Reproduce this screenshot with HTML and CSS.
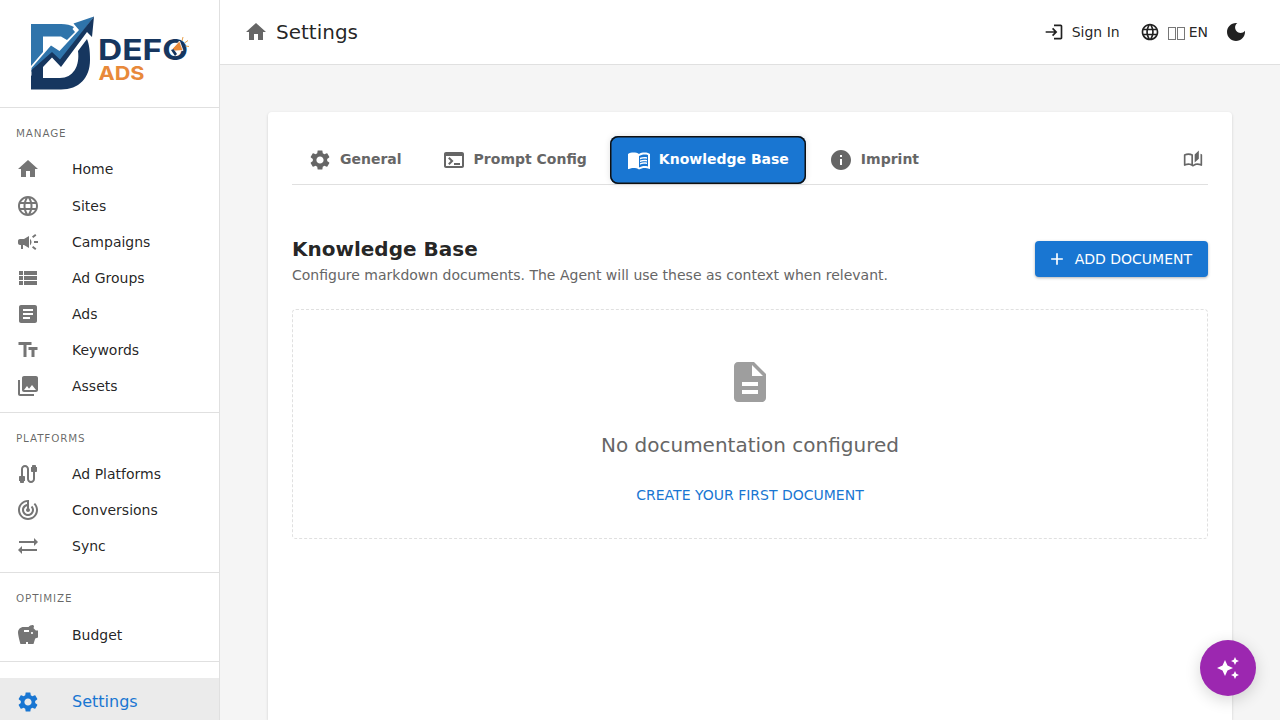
FILE: index.html
```html
<!DOCTYPE html>
<html lang="en">
<head>
    <meta charset="UTF-8">
    <meta name="viewport" content="width=device-width, initial-scale=1.0">
    <title>Settings - Defo Ads</title>
    <link rel="stylesheet" href="styles.css">
</head>
<body>

<div class="app">
    <aside class="sidebar">
        <div class="logo">
            <svg width="219" height="107" viewBox="0 0 219 107">
                <path fill="#2f74ab" d="M31 24H61Q69 24 74 27L72.500 29L75 32L67 40L61 36.500H43V52L31 66z"/>
                <path fill="#16365f" d="M31 89.500H61C79 89.500 90 78 90 60C90 50 89 44 87 39L78 51C80 66 73 78 60 78H43V66L31 76z"/>
                <path fill="#2f74ab" d="M31.500 68L51 45.500L59.500 51L79 30L73.500 23.500L94 16.500L60 62L52 54L31.500 72z"/>
                <path fill="#16365f" d="M31.500 77V70L52 52L60 59.500L94 16.500L92 37L87 32L61 67L52 57.500L43 67z"/>
                <text class="logo-defo" x="98" y="60" textLength="90" lengthAdjust="spacingAndGlyphs">DEFO</text>
                <text class="logo-ads" x="98.500" y="80" textLength="46" lengthAdjust="spacingAndGlyphs">ADS</text>
                <path fill="#e8893a" stroke="#fff" stroke-width="0.800" d="M172.500 48.500L179.500 41L183 50.500L175 51z"/>
                <path fill="#16365f" d="M171 50L173.500 49L177 54L175 56z"/>
                <path stroke="#e8a04a" stroke-width="1" d="M182 41L183 37M184.500 43L188 40.500M185.500 46L189 46.500"/>
            </svg>
        </div>

        <nav class="menu-section">
            <div class="menu-title">MANAGE</div>
            <a class="menu-item">
                <svg class="icon" viewBox="0 0 24 24"><path d="M10 20v-6h4v6h5v-8h3L12 3 2 12h3v8z"/></svg>
                <span>Home</span>
            </a>
            <a class="menu-item">
                <svg class="icon" viewBox="0 0 24 24"><path id="globe" d="M11.990 2C6.470 2 2 6.480 2 12s4.470 10 9.990 10C17.520 22 22 17.520 22 12S17.520 2 11.990 2m6.930 6h-2.950c-.32-1.250-.78-2.450-1.380-3.560 1.840.63 3.370 1.910 4.330 3.560M12 4.040c.83 1.200 1.480 2.530 1.910 3.960h-3.820c.43-1.430 1.080-2.760 1.910-3.960M4.260 14C4.100 13.360 4 12.690 4 12s.1-1.360.26-2h3.380c-.08.66-.14 1.320-.14 2s.06 1.340.14 2zm.82 2h2.950c.32 1.250.78 2.450 1.380 3.560-1.840-.63-3.370-1.900-4.330-3.560m2.950-8H5.080c.96-1.660 2.490-2.930 4.330-3.560C8.810 5.550 8.350 6.750 8.030 8M12 19.960c-.83-1.200-1.480-2.530-1.910-3.960h3.820c-.43 1.430-1.080 2.760-1.910 3.960M14.340 14H9.660c-.09-.66-.16-1.320-.16-2s.07-1.350.16-2h4.680c.09.65.16 1.320.16 2s-.07 1.340-.16 2m.25 5.560c.6-1.110 1.060-2.310 1.380-3.560h2.950c-.96 1.650-2.490 2.930-4.330 3.560M16.360 14c.08-.66.14-1.320.14-2s-.06-1.340-.14-2h3.380c.16.64.26 1.310.26 2s-.1 1.360-.26 2z"/></svg>
                <span>Sites</span>
            </a>
            <a class="menu-item">
                <svg class="icon" viewBox="0 0 24 24"><path d="M18 11v2h4v-2zm-2 6.610c.96.71 2.210 1.650 3.200 2.390.4-.53.8-1.070 1.200-1.600-.99-.74-2.240-1.680-3.200-2.400-.4.54-.8 1.080-1.200 1.610M20.400 5.600c-.4-.53-.8-1.070-1.200-1.600-.99.74-2.240 1.680-3.200 2.400.4.53.8 1.070 1.200 1.600.96-.72 2.210-1.650 3.200-2.400M4 9c-1.100 0-2 .9-2 2v2c0 1.100.9 2 2 2h1v4h2v-4h1l5 3V6L8 9zm11.500 3c0-1.330-.58-2.530-1.500-3.350v6.690c.92-.81 1.500-2.010 1.500-3.340"/></svg>
                <span>Campaigns</span>
            </a>
            <a class="menu-item">
                <svg class="icon" viewBox="0 0 24 24"><path d="M3 14h4v-4H3zm0 5h4v-4H3zM3 9h4V5H3zm5 5h13v-4H8zm0 5h13v-4H8zM8 5v4h13V5z"/></svg>
                <span>Ad Groups</span>
            </a>
            <a class="menu-item">
                <svg class="icon" viewBox="0 0 24 24"><path d="M19 3H5c-1.100 0-2 .9-2 2v14c0 1.100.9 2 2 2h14c1.100 0 2-.9 2-2V5c0-1.100-.9-2-2-2m-5 14H7v-2h7zm3-4H7v-2h10zm0-4H7V7h10z"/></svg>
                <span>Ads</span>
            </a>
            <a class="menu-item">
                <svg class="icon" viewBox="0 0 24 24"><path d="M2.500 4v3h5v12h3V7h5V4zm19 5h-9v3h3v7h3v-7h3z"/></svg>
                <span>Keywords</span>
            </a>
            <a class="menu-item">
                <svg class="icon" viewBox="0 0 24 24"><path d="M22 16V4c0-1.100-.9-2-2-2H8c-1.100 0-2 .9-2 2v12c0 1.100.9 2 2 2h12c1.100 0 2-.9 2-2m-11-4 2.030 2.710L16 11l4 5H8zM2 6v14c0 1.100.9 2 2 2h14v-2H4V6z"/></svg>
                <span>Assets</span>
            </a>
        </nav>

        <nav class="menu-section">
            <div class="menu-title">PLATFORMS</div>
            <a class="menu-item">
                <svg class="icon" viewBox="0 0 24 24"><path d="M20 5V4c0-.55-.45-1-1-1h-2c-.55 0-1 .45-1 1v1h-1v4c0 .55.45 1 1 1h1v7c0 1.100-.9 2-2 2s-2-.9-2-2V7c0-2.210-1.790-4-4-4S5 4.790 5 7v7H4c-.55 0-1 .45-1 1v4h1v1c0 .55.45 1 1 1h2c.55 0 1-.45 1-1v-1h1v-4c0-.55-.45-1-1-1H7V7c0-1.100.9-2 2-2s2 .9 2 2v10c0 2.210 1.790 4 4 4s4-1.790 4-4v-7h1c.55 0 1-.45 1-1V5z"/></svg>
                <span>Ad Platforms</span>
            </a>
            <a class="menu-item">
                <svg class="icon" viewBox="0 0 24 24"><path d="m19.070 4.930-1.410 1.410C19.100 7.790 20 9.790 20 12c0 4.420-3.580 8-8 8s-8-3.580-8-8c0-4.080 3.050-7.440 7-7.930v2.020C8.160 6.570 6 9.030 6 12c0 3.310 2.690 6 6 6s6-2.690 6-6c0-1.660-.67-3.160-1.760-4.240l-1.410 1.410C15.550 9.900 16 10.900 16 12c0 2.210-1.790 4-4 4s-4-1.790-4-4c0-1.860 1.280-3.410 3-3.860v2.140c-.6.35-1 .98-1 1.720 0 1.100.9 2 2 2s2-.9 2-2c0-.74-.4-1.380-1-1.720V2h-1C6.480 2 2 6.480 2 12s4.480 10 10 10 10-4.480 10-10c0-2.760-1.120-5.260-2.930-7.070"/></svg>
                <span>Conversions</span>
            </a>
            <a class="menu-item">
                <svg class="icon" viewBox="0 0 24 24"><path d="m18 12 4-4-4-4v3H3v2h15zM6 12l-4 4 4 4v-3h15v-2H6z"/></svg>
                <span>Sync</span>
            </a>
        </nav>

        <nav class="menu-section">
            <div class="menu-title">OPTIMIZE</div>
            <a class="menu-item">
                <svg class="icon" viewBox="0 0 24 24"><path d="m19.830 7.500-2.270-2.270c.07-.42.18-.81.32-1.150.08-.18.12-.37.12-.58 0-.83-.67-1.500-1.500-1.500-1.640 0-3.090.79-4 2h-5C4.460 4 2 6.460 2 9.500S4.500 21 4.500 21H10v-2h2v2h5.500l1.680-5.590 2.820-.94V7.500zM13 9H8V7h5zm3 2c-.55 0-1-.45-1-1s.45-1 1-1 1 .45 1 1-.45 1-1 1"/></svg>
                <span>Budget</span>
            </a>
        </nav>

        <a class="menu-item settings-item">
            <svg class="icon" viewBox="0 0 24 24"><path id="gear" d="M19.140 12.940c.04-.3.06-.61.06-.94 0-.32-.02-.64-.07-.94l2.030-1.580c.18-.14.23-.41.12-.61l-1.920-3.320c-.12-.22-.37-.29-.59-.22l-2.390.96c-.5-.38-1.030-.7-1.620-.94l-.36-2.540c-.04-.24-.24-.41-.48-.41h-3.840c-.24 0-.43.17-.47.41l-.36 2.540c-.59.24-1.130.57-1.620.94l-2.390-.96c-.22-.08-.47 0-.59.22L2.740 8.870c-.12.21-.08.47.12.61l2.030 1.580c-.05.3-.09.63-.09.94s.02.64.07.94l-2.030 1.580c-.18.14-.23.41-.12.61l1.920 3.320c.12.22.37.29.59.22l2.390-.96c.5.38 1.030.7 1.620.94l.36 2.540c.05.24.24.41.48.41h3.840c.24 0 .44-.17.47-.41l.36-2.540c.59-.24 1.130-.56 1.620-.94l2.390.96c.22.08.47 0 .59-.22l1.920-3.320c.12-.22.07-.47-.12-.61zM12 15.600c-1.980 0-3.600-1.620-3.600-3.600s1.620-3.600 3.600-3.600 3.600 1.620 3.600 3.600-1.620 3.600-3.600 3.600"/></svg>
            <span>Settings</span>
        </a>
    </aside>

    <main class="main">
        <header class="topbar">
            <svg class="icon home-icon" viewBox="0 0 24 24"><path d="M10 20v-6h4v6h5v-8h3L12 3 2 12h3v8z"/></svg>
            <h1 class="page-title">Settings</h1>
            <div class="topbar-actions">
                <a class="top-link sign-in">
                    <svg class="icon icon-small" viewBox="0 0 24 24"><path d="M11 7 9.600 8.400l2.600 2.600H2v2h10.200l-2.600 2.600L11 17l5-5zm9 12h-8v2h8c1.100 0 2-.9 2-2V5c0-1.100-.9-2-2-2h-8v2h8z"/></svg>
                    <span>Sign In</span>
                </a>
                <a class="top-link language">
                    <svg class="icon icon-small" viewBox="0 0 24 24"><use href="#globe"/></svg>
                    <span class="flag"><i></i><i></i></span>
                    <span>EN</span>
                </a>
                <svg class="icon" viewBox="0 0 24 24"><path d="M12 3c-4.970 0-9 4.030-9 9s4.030 9 9 9 9-4.030 9-9c0-.46-.04-.92-.1-1.360-.98 1.370-2.580 2.260-4.400 2.260-2.980 0-5.400-2.420-5.400-5.400 0-1.810.89-3.420 2.260-4.400-.44-.06-.9-.1-1.360-.1"/></svg>
            </div>
        </header>

        <section class="card">
            <div class="tabs">
                <button class="tab">
                    <svg class="icon" viewBox="0 0 24 24"><use href="#gear"/></svg>
                    <span>General</span>
                </button>
                <button class="tab">
                    <svg class="icon" viewBox="0 0 24 24"><path d="M20 4H4c-1.110 0-2 .9-2 2v12c0 1.100.89 2 2 2h16c1.100 0 2-.9 2-2V6c0-1.100-.89-2-2-2m0 14H4V8h16zm-2-1h-6v-2h6zM7.500 17l-1.410-1.410L8.670 13l-2.590-2.590L7.500 9l4 4z"/></svg>
                    <span>Prompt Config</span>
                </button>
                <button class="tab active">
                    <svg class="icon" viewBox="0 0 24 24"><path d="M21 5c-1.110-.35-2.330-.5-3.500-.5-1.950 0-4.050.4-5.500 1.500-1.450-1.100-3.550-1.500-5.500-1.500S2.450 4.900 1 6v14.650c0 .25.25.5.5.5.1 0 .15-.05.25-.05C3.100 20.450 5.050 20 6.500 20c1.950 0 4.050.4 5.500 1.500 1.350-.85 3.800-1.500 5.500-1.500 1.650 0 3.350.3 4.750 1.050.1.05.15.05.25.05.25 0 .5-.25.5-.5V6c-.6-.45-1.250-.75-2-1m0 13.500c-1.100-.35-2.300-.5-3.500-.5-1.700 0-4.150.65-5.500 1.500V8c1.350-.85 3.800-1.500 5.500-1.500 1.200 0 2.400.15 3.500.5z"/><path d="M17.500 10.500c.88 0 1.730.09 2.500.26V9.240c-.79-.15-1.640-.24-2.500-.24-1.700 0-3.240.29-4.500.83v1.660c1.130-.64 2.700-.99 4.500-.99M13 12.490v1.660c1.130-.64 2.700-.99 4.500-.99.88 0 1.730.09 2.500.26V11.900c-.79-.15-1.640-.24-2.500-.24-1.700 0-3.240.3-4.500.83m4.500 1.840c-1.700 0-3.240.29-4.500.83v1.660c1.130-.64 2.700-.99 4.500-.99.88 0 1.730.09 2.500.26v-1.520c-.79-.16-1.640-.24-2.500-.24"/></svg>
                    <span>Knowledge Base</span>
                </button>
                <button class="tab">
                    <svg class="icon" viewBox="0 0 24 24"><path d="M12 2C6.480 2 2 6.480 2 12s4.480 10 10 10 10-4.480 10-10S17.520 2 12 2m1 15h-2v-6h2zm0-8h-2V7h2z"/></svg>
                    <span>Imprint</span>
                </button>
                <svg class="icon icon-small docs-icon" viewBox="0 0 24 24"><path d="M22.470 5.200c-.47-.24-.96-.44-1.470-.61v12.030c-1.140-.41-2.310-.62-3.500-.62-1.900 0-3.780.54-5.500 1.580V5.480C10.380 4.550 8.510 4 6.500 4c-1.790 0-3.480.44-4.970 1.200-.33.16-.53.51-.53.88v12.080c0 .58.47.99 1 .99.16 0 .32-.04.48-.12C3.690 18.400 5.050 18 6.500 18c2.070 0 3.980.82 5.500 2 1.520-1.180 3.430-2 5.500-2 1.450 0 2.810.4 4.020 1.040.16.08.32.12.48.12.52 0 1-.41 1-.99V6.080c0-.37-.2-.72-.53-.88M10 16.620C8.860 16.210 7.690 16 6.500 16s-2.360.21-3.500.62V6.710C4.110 6.240 5.280 6 6.500 6s2.390.24 3.500.71zM19 .5l-5 5V15l5-4.500z"/></svg>
            </div>

            <div class="section-head">
                <div>
                    <h2>Knowledge Base</h2>
                    <p>Configure markdown documents. The Agent will use these as context when relevant.</p>
                </div>
                <button class="add-button">
                    <svg class="icon icon-small" viewBox="0 0 24 24"><path d="M19 13h-6v6h-2v-6H5v-2h6V5h2v6h6z"/></svg>
                    <span>ADD DOCUMENT</span>
                </button>
            </div>

            <div class="empty-box">
                <svg class="icon empty-icon" viewBox="0 0 24 24"><path d="M14 2H6c-1.100 0-1.990.9-1.990 2L4 20c0 1.100.89 2 1.990 2H18c1.100 0 2-.9 2-2V8zm2 16H8v-2h8zm0-4H8v-2h8zm-3-5V3.500L18.500 9z"/></svg>
                <h3>No documentation configured</h3>
                <button class="create-button">CREATE YOUR FIRST DOCUMENT</button>
            </div>
        </section>
    </main>

    <button class="assistant-button">
        <svg class="icon" viewBox="0 0 24 24"><path d="m19 9 1.250-2.750L23 5l-2.750-1.250L19 1l-1.250 2.750L15 5l2.750 1.250zm-7.500.5L9 4 6.500 9.500 1 12l5.500 2.500L9 20l2.500-5.500L17 12zM19 15l-1.250 2.750L15 19l2.750 1.250L19 23l1.250-2.750L23 19l-2.750-1.250z"/></svg>
    </button>
</div>

</body>
</html>
```
FILE: styles.css
```css
* {
    box-sizing: border-box;
}

body {
    margin: 0;
    font-family: "DejaVu Sans", sans-serif;
    font-size: 14px;
    color: rgba(0, 0, 0, 0.87);
    background-color: #f5f5f5;
}

h1, h2, h3, p {
    margin: 0;
}

button {
    font-family: inherit;
    font-size: 14px;
    border: none;
    background: none;
    cursor: pointer;
}

.app {
    display: flex;
    height: 100vh;
    overflow: hidden;
}

.icon {
    width: 24px;
    height: 24px;
    flex-shrink: 0;
    fill: currentColor;
}

.icon-small {
    width: 20px;
    height: 20px;
}

/* Sidebar */
.sidebar {
    width: 220px;
    flex-shrink: 0;
    background-color: #fff;
    border-right: 1px solid #e0e0e0;
    overflow: hidden;
}

.logo {
    height: 108px;
    border-bottom: 1px solid #e0e0e0;
}

.logo-defo {
    font-family: Inter, sans-serif;
    font-size: 29px;
    font-weight: 700;
    fill: #16365f;
}

.logo-ads {
    font-family: Inter, sans-serif;
    font-size: 19px;
    font-weight: 700;
    fill: #e8893a;
}

.menu-section {
    padding-bottom: 7.7px;
    border-bottom: 1px solid #e0e0e0;
}

.menu-section:last-of-type {
    padding-bottom: 8px;
}

.menu-title {
    height: 43.4px;
    padding-left: 16px;
    font-size: 10.4px;
    line-height: 50px;
    letter-spacing: 0.85px;
    color: rgba(0, 0, 0, 0.6);
}

.menu-item {
    display: flex;
    align-items: center;
    gap: 32px;
    height: 36.1px;
    padding-left: 16px;
}

.menu-item .icon {
    color: #757575;
}

.settings-item {
    height: 48px;
    margin-top: 16px;
    font-size: 16px;
    background-color: #ebebeb;
    color: #1976d2;
}

.settings-item .icon {
    color: #1976d2;
}

/* Top bar */
.main {
    flex: 1;
    display: flex;
    flex-direction: column;
}

.topbar {
    display: flex;
    align-items: center;
    height: 65px;
    padding: 0 32px 1px 24px;
    background-color: #fff;
    border-bottom: 1px solid #e0e0e0;
}

.home-icon {
    color: #666;
}

.page-title {
    margin-left: 8px;
    font-size: 20px;
    font-weight: 400;
}

.topbar-actions {
    display: flex;
    align-items: center;
    margin-left: auto;
}

.top-link {
    display: flex;
    align-items: center;
    gap: 8px;
}

.sign-in {
    margin-right: 20px;
}

.language {
    margin-right: 16px;
}

.flag {
    display: flex;
    gap: 1px;
    margin-right: -4px;
    padding-top: 3px;
}

.flag i {
    width: 8px;
    height: 13px;
    border: 1px solid #777;
}

/* Content */
.card {
    flex: 1;
    margin: 47px 48px 0;
    padding: 24px;
    background-color: #fff;
    border-radius: 4px 4px 0 0;
    box-shadow: 0 1px 3px rgba(0, 0, 0, 0.16);
}

.tabs {
    display: flex;
    align-items: center;
    gap: 8px;
    height: 49px;
    border-bottom: 1px solid #e0e0e0;
}

.tab {
    display: flex;
    align-items: center;
    gap: 8px;
    height: 48px;
    padding: 0 16px;
    font-weight: 700;
    color: #666;
    border-radius: 8px;
}

.tab span {
    margin-top: -2px;
}

.tab.active {
    margin: 0 -1px;
    padding: 0 17px;
    color: #fff;
    background-color: #1976d2;
    box-shadow: inset 0 0 0 1.5px #101010, 0 0 6px rgba(0, 0, 0, 0.12);
}

.docs-icon {
    margin-left: auto;
    margin-right: 5px;
    color: #666;
}

.section-head {
    display: flex;
    align-items: center;
    justify-content: space-between;
    margin-top: 48px;
}

.section-head h2 {
    font-size: 20px;
    line-height: 32px;
}

.section-head p {
    line-height: 20px;
    color: #666;
}

.add-button {
    display: flex;
    align-items: center;
    gap: 8px;
    height: 36px;
    padding: 0 16px 0 12px;
    color: #fff;
    background-color: #1976d2;
    border-radius: 4px;
    box-shadow: 0 1px 3px rgba(0, 0, 0, 0.3);
}

.empty-box {
    display: flex;
    flex-direction: column;
    align-items: center;
    height: 230px;
    margin-top: 24px;
    padding-top: 48px;
    border: 1px dashed #e0e0e0;
    border-radius: 4px;
}

.empty-icon {
    width: 48px;
    height: 48px;
    color: #9e9e9e;
}

.empty-box h3 {
    margin-top: 23px;
    font-size: 20px;
    font-weight: 400;
    line-height: 32px;
    color: #666;
}

.create-button {
    height: 36px;
    margin-top: 16px;
    color: #1976d2;
}

/* Floating assistant button */
.assistant-button {
    position: absolute;
    right: 24px;
    bottom: 24px;
    display: flex;
    align-items: center;
    justify-content: center;
    width: 56px;
    height: 56px;
    color: #fff;
    background-color: #9c27b0;
    border-radius: 50%;
    box-shadow: 0 4px 16px rgba(0, 0, 0, 0.16);
}
```
